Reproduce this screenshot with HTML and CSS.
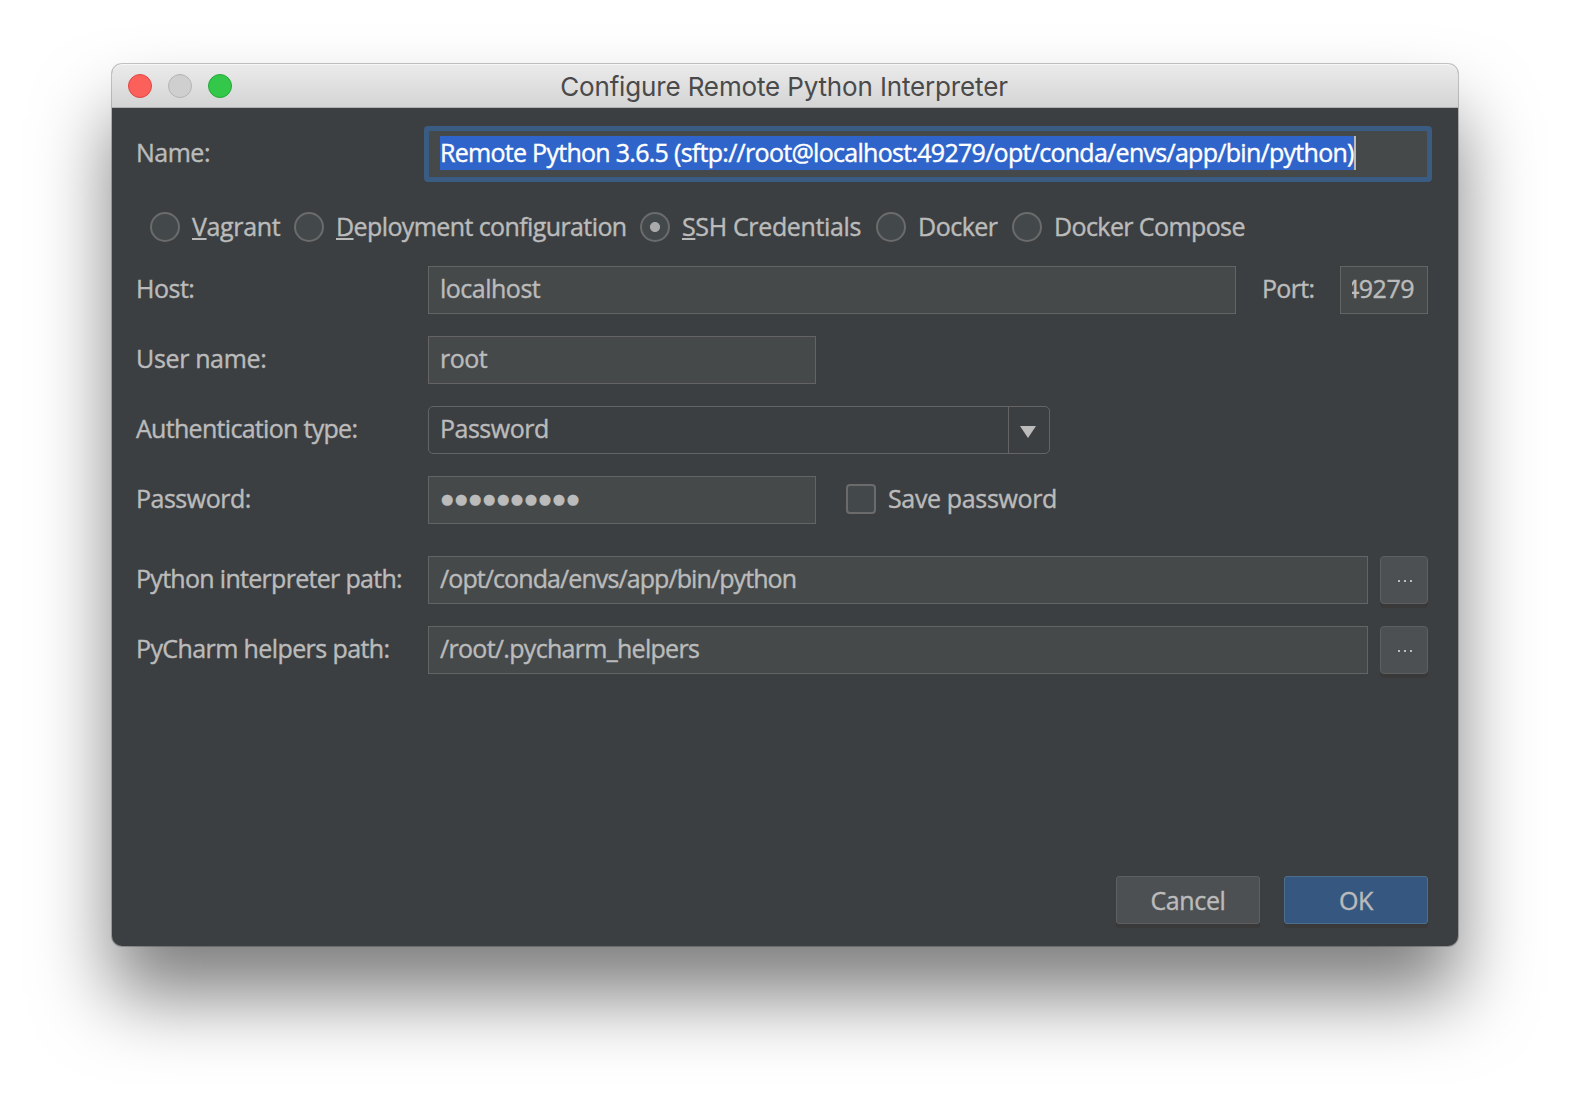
FILE: index.html
```html
<!DOCTYPE html>
<html lang="en">
<head>
<meta charset="utf-8">
<title>Configure Remote Python Interpreter</title>
<link rel="stylesheet" href="styles.css">
</head>
<body>
<main class="window">
  <header class="titlebar">
    <div class="lights"><span class="light red"></span><span class="light gray"></span><span class="light green"></span></div>
    <h1 class="title"><span>Configure Remote Python Interpreter</span></h1>
  </header>
  <section class="content">
    <div class="row name-row">
      <span class="label">Name:</span>
      <div class="field focused"><span class="selection">Remote Python 3.6.5 (sftp://root@localhost:49279/opt/conda/envs/app/bin/python)</span><span class="caret"></span></div>
    </div>
    <div class="radios">
      <span class="radio"><i class="circle"></i><span class="loose"><u>V</u>agrant</span></span>
      <span class="radio"><i class="circle"></i><span class="snug"><u>D</u>eployment configuration</span></span>
      <span class="radio"><i class="circle checked"></i><span class="loose"><u>S</u>SH Credentials</span></span>
      <span class="radio"><i class="circle"></i><span>Docker</span></span>
      <span class="radio"><i class="circle"></i><span class="snug">Docker Compose</span></span>
    </div>
    <div class="form">
      <div class="row">
        <span class="label">Host:</span>
        <div class="field grow"><span>localhost</span></div>
        <span class="port-label">Port:</span>
        <div class="field port"><span class="clip"><span>49279</span></span></div>
      </div>
      <div class="row">
        <span class="label loose">User name:</span>
        <div class="field short"><span>root</span></div>
      </div>
      <div class="row">
        <span class="label tight">Authentication type:</span>
        <div class="combo"><span class="value">Password</span><span class="arrow"><svg width="16" height="12" viewBox="0 0 16 12"><path d="M0 0H16L8 12Z" fill="#bbb"/></svg></span></div>
      </div>
      <div class="row">
        <span class="label">Password:</span>
        <div class="field short"><span class="dots">●●●●●●●●●●</span></div>
        <i class="checkbox"></i><span class="loose">Save password</span>
      </div>
      <div class="row path-row">
        <span class="label tight">Python interpreter path:</span>
        <div class="field grow"><span class="tightest">/opt/conda/envs/app/bin/python</span></div>
        <span class="browse"><svg width="14" height="2" viewBox="0 0 14 2"><path d="M0 0h2v2H0zM6 0h2v2H6zM12 0h2v2h-2z" fill="#bbb"/></svg></span>
      </div>
      <div class="row">
        <span class="label snug">PyCharm helpers path:</span>
        <div class="field grow"><span class="tight">/root/.pycharm_helpers</span></div>
        <span class="browse"><svg width="14" height="2" viewBox="0 0 14 2"><path d="M0 0h2v2H0zM6 0h2v2H6zM12 0h2v2h-2z" fill="#bbb"/></svg></span>
      </div>
    </div>
    <footer class="actions">
      <span class="button loose">Cancel</span>
      <span class="button primary">OK</span>
    </footer>
  </section>
</main>
</body>
</html>
```

FILE: styles.css
```css
* { box-sizing: border-box; }
html, body { height: 100%; overflow: hidden; }
body {
  margin: 0;
  padding: 64px 112px;
  background: #fff;
  font: 25px/34px "Open Sans", "Noto Sans", sans-serif;
  letter-spacing: -0.5px;
  -webkit-text-stroke: 0.4px;
  color: #bbb;
  white-space: nowrap;
}
.loose { letter-spacing: -0.35px; }
.snug { letter-spacing: -0.6px; }
.tight { letter-spacing: -0.7px; }
.tightest { letter-spacing: -0.91px; }
.window {
  width: 1346px;
  height: 882px;
  display: flex;
  flex-direction: column;
  border-radius: 10px;
  background: #3c3f41;
  box-shadow: 0 0 0 1px rgba(0, 0, 0, .22), 0 50px 76px rgba(0, 0, 0, .5);
}
.titlebar {
  height: 44px;
  display: grid;
  grid-template-columns: 140px 1fr 142px;
  align-items: center;
  border-radius: 10px 10px 0 0;
  border-bottom: 1px solid #b1b1b1;
  background: linear-gradient(#ebebeb, #d4d4d4);
  box-shadow: inset 0 1px #f6f6f6;
}
.lights { display: flex; gap: 16px; padding-left: 16px; }
.light { width: 24px; height: 24px; border-radius: 50%; border: 1px solid; }
.red { background: #fc605b; border-color: #df4744; }
.gray { background: #cfcfcf; border-color: #b4b4b4; }
.green { background: #34c84a; border-color: #24a938; }
.title {
  margin: 0;
  padding-top: 2px;
  text-align: center;
  font: 400 26px/32px Inter, Roboto, sans-serif;
  letter-spacing: -0.15px;
  -webkit-text-stroke: 0;
  color: #4a4a4a;
}
.content { flex: 1; display: flex; flex-direction: column; padding: 18px 30px 22px 24px; }
.row { display: flex; align-items: center; height: 48px; }
.row > span { padding-bottom: 4px; }
.label { width: 292px; flex: none; }
.field {
  height: 48px;
  padding: 4px 11px;
  border: 1px solid #646464;
  background: #45494a;
}
.field.grow { flex: 1; }
.field.short { width: 388px; }
.name-row { height: 56px; margin-right: -4px; }
.name-row .label { width: 288px; }
.field.focused {
  flex: 1;
  height: 56px;
  display: flex;
  padding: 5px 11px;
  border: 5px solid #3a5b82;
  border-radius: 4px;
}
.selection { height: 34px; line-height: 32px; letter-spacing: -0.715px; background: #2f65ca; color: #fff; }
.caret { width: 2px; height: 34px; background: #bbb; }
.radios {
  display: grid;
  grid-template-columns: 144px 346px 236px 136px auto;
  margin: 28px 0 22px 14px;
}
.radio { display: flex; align-items: center; gap: 12px; height: 34px; }
.radio > span { padding-bottom: 2px; }
u { text-decoration: underline 2px; text-underline-offset: 2px; text-decoration-skip-ink: none; }
.circle {
  width: 30px;
  height: 30px;
  flex: none;
  border: 2px solid #6b6b6b;
  border-radius: 50%;
  background: #43494a;
}
.circle.checked { background: radial-gradient(circle, #aaa 4.6px, #43494a 5.4px); }
.form { display: flex; flex-direction: column; gap: 22px; }
.port-label { width: 104px; padding-left: 26px; letter-spacing: -0.7px; }
.field.port { width: 88px; }
.clip { display: flex; justify-content: flex-end; width: 62px; overflow: hidden; }
.combo {
  width: 622px;
  height: 48px;
  display: flex;
  border: 1px solid #646464;
  border-radius: 5px;
}
.value { flex: 1; padding: 4px 11px; }
.arrow { width: 41px; border-left: 1px solid #646464; display: flex; align-items: center; justify-content: center; padding: 4px 2px 0 0; }
.dots {
  display: block;
  padding-left: 1px;
  font: 14.3px/36px "DejaVu Sans", sans-serif;
  letter-spacing: 1.5px;
  -webkit-text-stroke: 0.2px;
}
.checkbox {
  width: 30px;
  height: 30px;
  margin: 0 12px 2px 30px;
  border: 2px solid #6b6b6b;
  border-radius: 4px;
  background: #43494a;
}
.path-row { margin-top: 10px; }
.browse {
  width: 48px;
  height: 48px;
  margin-left: 12px;
  display: flex;
  align-items: center;
  justify-content: center;
  border: 1px solid #5e6060;
  border-radius: 4px;
  background: #4c5052;
  box-shadow: 0 4px #393939;
}
.row > .browse { padding: 2px 0 0 2px; }
.actions { margin-top: auto; display: flex; justify-content: flex-end; gap: 24px; }
.button {
  width: 144px;
  height: 48px;
  padding-top: 6px;
  text-align: center;
  border: 1px solid #5e6060;
  border-radius: 3px;
  background: #4c5052;
  box-shadow: 0 4px #393939;
}
.primary { background: #365880; border-color: #4c708c; }
```
